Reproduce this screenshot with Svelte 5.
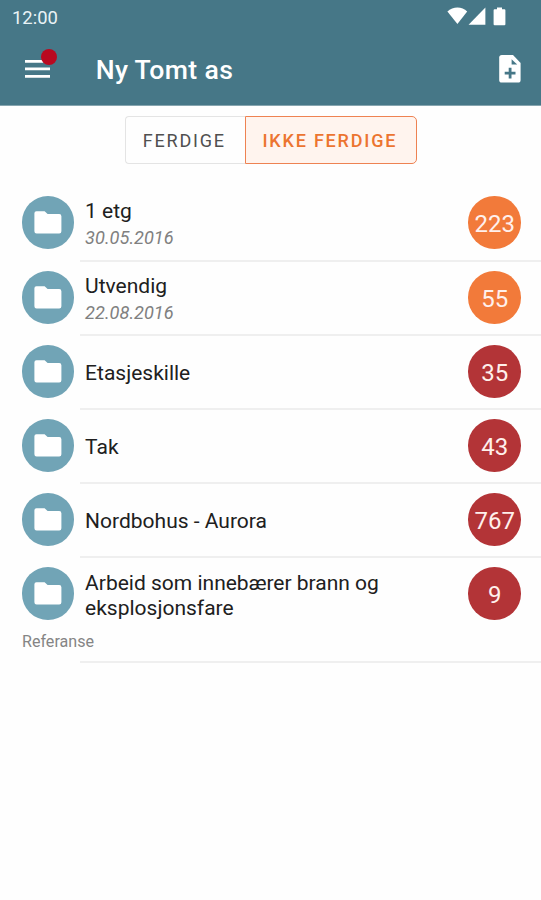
<script>
  const items = [
    { title: '1 etg', date: '30.05.2016', count: 223, warm: true },
    { title: 'Utvendig', date: '22.08.2016', count: 55, warm: true },
    { title: 'Etasjeskille', count: 35 },
    { title: 'Tak', count: 43 },
    { title: 'Nordbohus - Aurora', count: 767 },
    { title: 'Arbeid som innebærer brann og eksplosjonsfare', count: 9, note: 'Referanse' }
  ];
</script>

<div class="screen">
  <header>
    <div class="status">
      <span class="time">12:00</span>
      <svg class="signals" width="60" height="20" viewBox="0 0 60 20" fill="#fff">
        <path d="M0.4 4.6C6 -0.8 15 -0.8 20.2 4.6L10.4 17Z" />
        <path d="M38.4 0.6V17.8H21.6Z" />
        <path d="M50 0.4h5v1.8h2.4q1 0 1 1v14q0 1-1 1h-9.8q-1 0-1-1v-14q0-1 1-1h2.4z" />
      </svg>
    </div>
    <div class="toolbar">
      <button class="menu" aria-label="Meny">
        <svg width="25" height="18" viewBox="0 0 25 18" fill="#fff">
          <path d="M0 0h25v2.8H0zM0 7.5h25v2.8H0zM0 15h25v2.8H0z" />
        </svg>
        <i class="dot"></i>
      </button>
      <h1>Ny Tomt as</h1>
      <button class="add" aria-label="Legg til">
        <svg width="22" height="28" viewBox="0 0 22 28">
          <path fill="#fff" d="M2.8 0H14L21.6 8V25Q21.6 27.6 19 27.6H2.8Q0.2 27.6 0.2 25V2.6Q0.2 0 2.8 0Z" />
          <path fill="#467787" d="M12.6 4.2V9.6H18.2Z" />
          <path fill="#467787" d="M9.7 12.8h2.8v4h4v2.8h-4v4H9.7v-4h-4v-2.8h4z" />
        </svg>
      </button>
    </div>
  </header>

  <div class="tabs">
    <button class="tab left">FERDIGE</button>
    <button class="tab right">IKKE FERDIGE</button>
  </div>

  <ul>
    {#each items as item}
      <li>
        <div class="row">
          <span class="folder">
            <svg width="28" height="23" viewBox="0 0 28 23" fill="#fff">
              <path d="M2.4 0.3H10.6L13.6 3H25.2Q27.4 3 27.4 5.2V20.2Q27.4 22.4 25.2 22.4H2.6Q0.4 22.4 0.4 20.2V2.3Q0.4 0.3 2.4 0.3Z" />
            </svg>
          </span>
          <div class="text" class:tall={item.note || item.date}>
            <span class="title">{item.title}</span>
            {#if item.date}<span class="date">{item.date}</span>{/if}
          </div>
          <span class="count" class:warm={item.warm}>{item.count}</span>
        </div>
        {#if item.note}<div class="note">{item.note}</div>{/if}
      </li>
    {/each}
  </ul>
</div>

<style>
  .screen {
    width: 541px;
    height: 900px;
    background: #fefefe;
    font-family: Roboto, sans-serif;
    overflow: hidden;
  }
  button {
    font-family: inherit;
    border: 0;
    background: none;
    padding: 0;
  }
  svg { display: block; }
  header {
    height: 105px;
    background: #467787;
    border-bottom: 1px solid #86a5af;
    color: #fff;
  }
  .status {
    display: flex;
    justify-content: space-between;
    align-items: flex-start;
    height: 34px;
    padding: 7px 34px 0 12px;
    box-sizing: border-box;
  }
  .time {
    font-size: 18.4px;
    line-height: 21px;
    color: #e9f3f6;
  }
  .toolbar {
    display: flex;
    align-items: center;
    height: 70px;
    padding: 0 20px 0 25px;
  }
  .menu { position: relative; }
  .dot {
    position: absolute;
    left: 16px;
    top: -11px;
    width: 16px;
    height: 16px;
    border-radius: 50%;
    background: #b90920;
  }
  h1 {
    flex: 1;
    margin: 2px 0 0 45.7px;
    font-size: 26.6px;
    letter-spacing: 0.35px;
    font-weight: 500;
    line-height: 32px;
  }
  .tabs {
    display: flex;
    height: 48px;
    margin: 10px 124px 0 125px;
  }
  .tab {
    height: 48px;
    box-sizing: border-box;
    border: 1.5px solid #e4e4e4;
    font-size: 18px;
    letter-spacing: 1.8px;
    color: #505050;
    text-align: center;
    padding-right: 2.4px;
  }
  .left {
    width: 120px;
    border-right: 0;
    border-radius: 4px 0 0 4px;
  }
  .right {
    width: 172px;
    border-color: #ee8252;
    border-radius: 0 5px 5px 0;
    background: #fff4ee;
    color: #ec7430;
    font-weight: 500;
  }
  ul {
    margin: 23px 0 0;
    padding: 0;
    list-style: none;
  }
  li {
    height: 74px;
    box-sizing: border-box;
    background: linear-gradient(#efefef, #efefef) 80px 100% / 461px 2px no-repeat;
  }
  li:first-child { height: 75px; }
  li:last-child { height: 105px; }
  .row {
    display: flex;
    align-items: center;
    height: 71.2px;
    padding: 0 20px 0 21.5px;
  }
  .folder, .count {
    display: flex;
    flex: none;
    align-items: center;
    justify-content: center;
    width: 52.6px;
    height: 52.6px;
    border-radius: 50%;
    background: #71a4b6;
  }
  .text {
    display: flex;
    flex-direction: column;
    flex: 1;
    margin-left: 11px;
    padding-right: 70px;
    padding-top: 3.4px;
  }
  .tall { padding-top: 4.8px; }
  .title {
    font-size: 21px;
    line-height: 25px;
    color: #202020;
  }
  .date {
    margin-top: 1px;
    font-size: 18.2px;
    line-height: 26px;
    font-style: italic;
    color: #808080;
  }
  .count {
    background: #b33437;
    color: #fff0ec;
    font-size: 24px;
    padding-top: 2.4px;
    box-sizing: border-box;
  }
  .warm { background: #f27a3a; }
  .note {
    margin-left: 22px;
    padding-top: 2.8px;
    font-size: 16.1px;
    line-height: 20px;
    color: #858585;
  }
</style>
